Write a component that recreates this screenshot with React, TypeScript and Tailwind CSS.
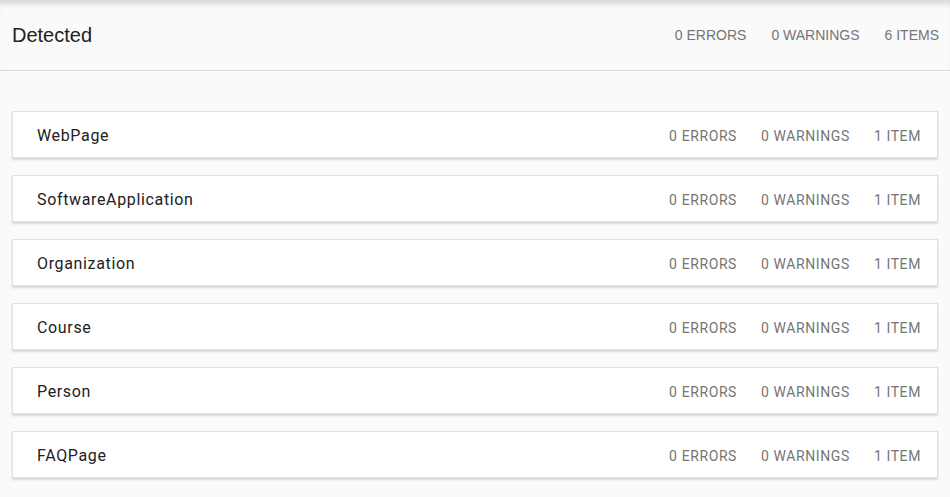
import React from "react";

const items = ["WebPage", "SoftwareApplication", "Organization", "Course", "Person", "FAQPage"];

export default function App() {
  return (
    <div className="min-h-[497px] w-full bg-[#fafafa]">
      <div className="relative flex h-[71px] items-center justify-between border-b border-[#dcdcdc] pl-3 pr-[11px] shadow-[inset_0_8px_8px_-6px_rgba(0,0,0,0.2)]">
        <div className="font-['Liberation_Sans',Arial,sans-serif] text-[20px] text-[#212121]">Detected</div>
        <div className="flex gap-[25px] font-['Liberation_Sans',Arial,sans-serif] text-[14px] text-[#757575]">
          <span>0 ERRORS</span>
          <span>0 WARNINGS</span>
          <span>6 ITEMS</span>
        </div>
      </div>
      <div className="flex flex-col gap-[17px] px-3 pt-10">
        {items.map((name) => (
          <div
            key={name}
            className="flex h-[47px] items-center justify-between border border-[#e0e0e0] bg-white pl-6 pr-4 pt-[2px] shadow-[0_2px_2px_rgba(0,0,0,0.14)]"
          >
            <span className="font-['Roboto',sans-serif] text-[16px] tracking-[0.65px] text-[#212121]">{name}</span>
            <div className="flex gap-6 pt-[2px] font-['Roboto',sans-serif] text-[14px] tracking-[0.6px] text-[#757575]">
              <span>0 ERRORS</span>
              <span>0 WARNINGS</span>
              <span>1 ITEM</span>
            </div>
          </div>
        ))}
      </div>
    </div>
  );
}
